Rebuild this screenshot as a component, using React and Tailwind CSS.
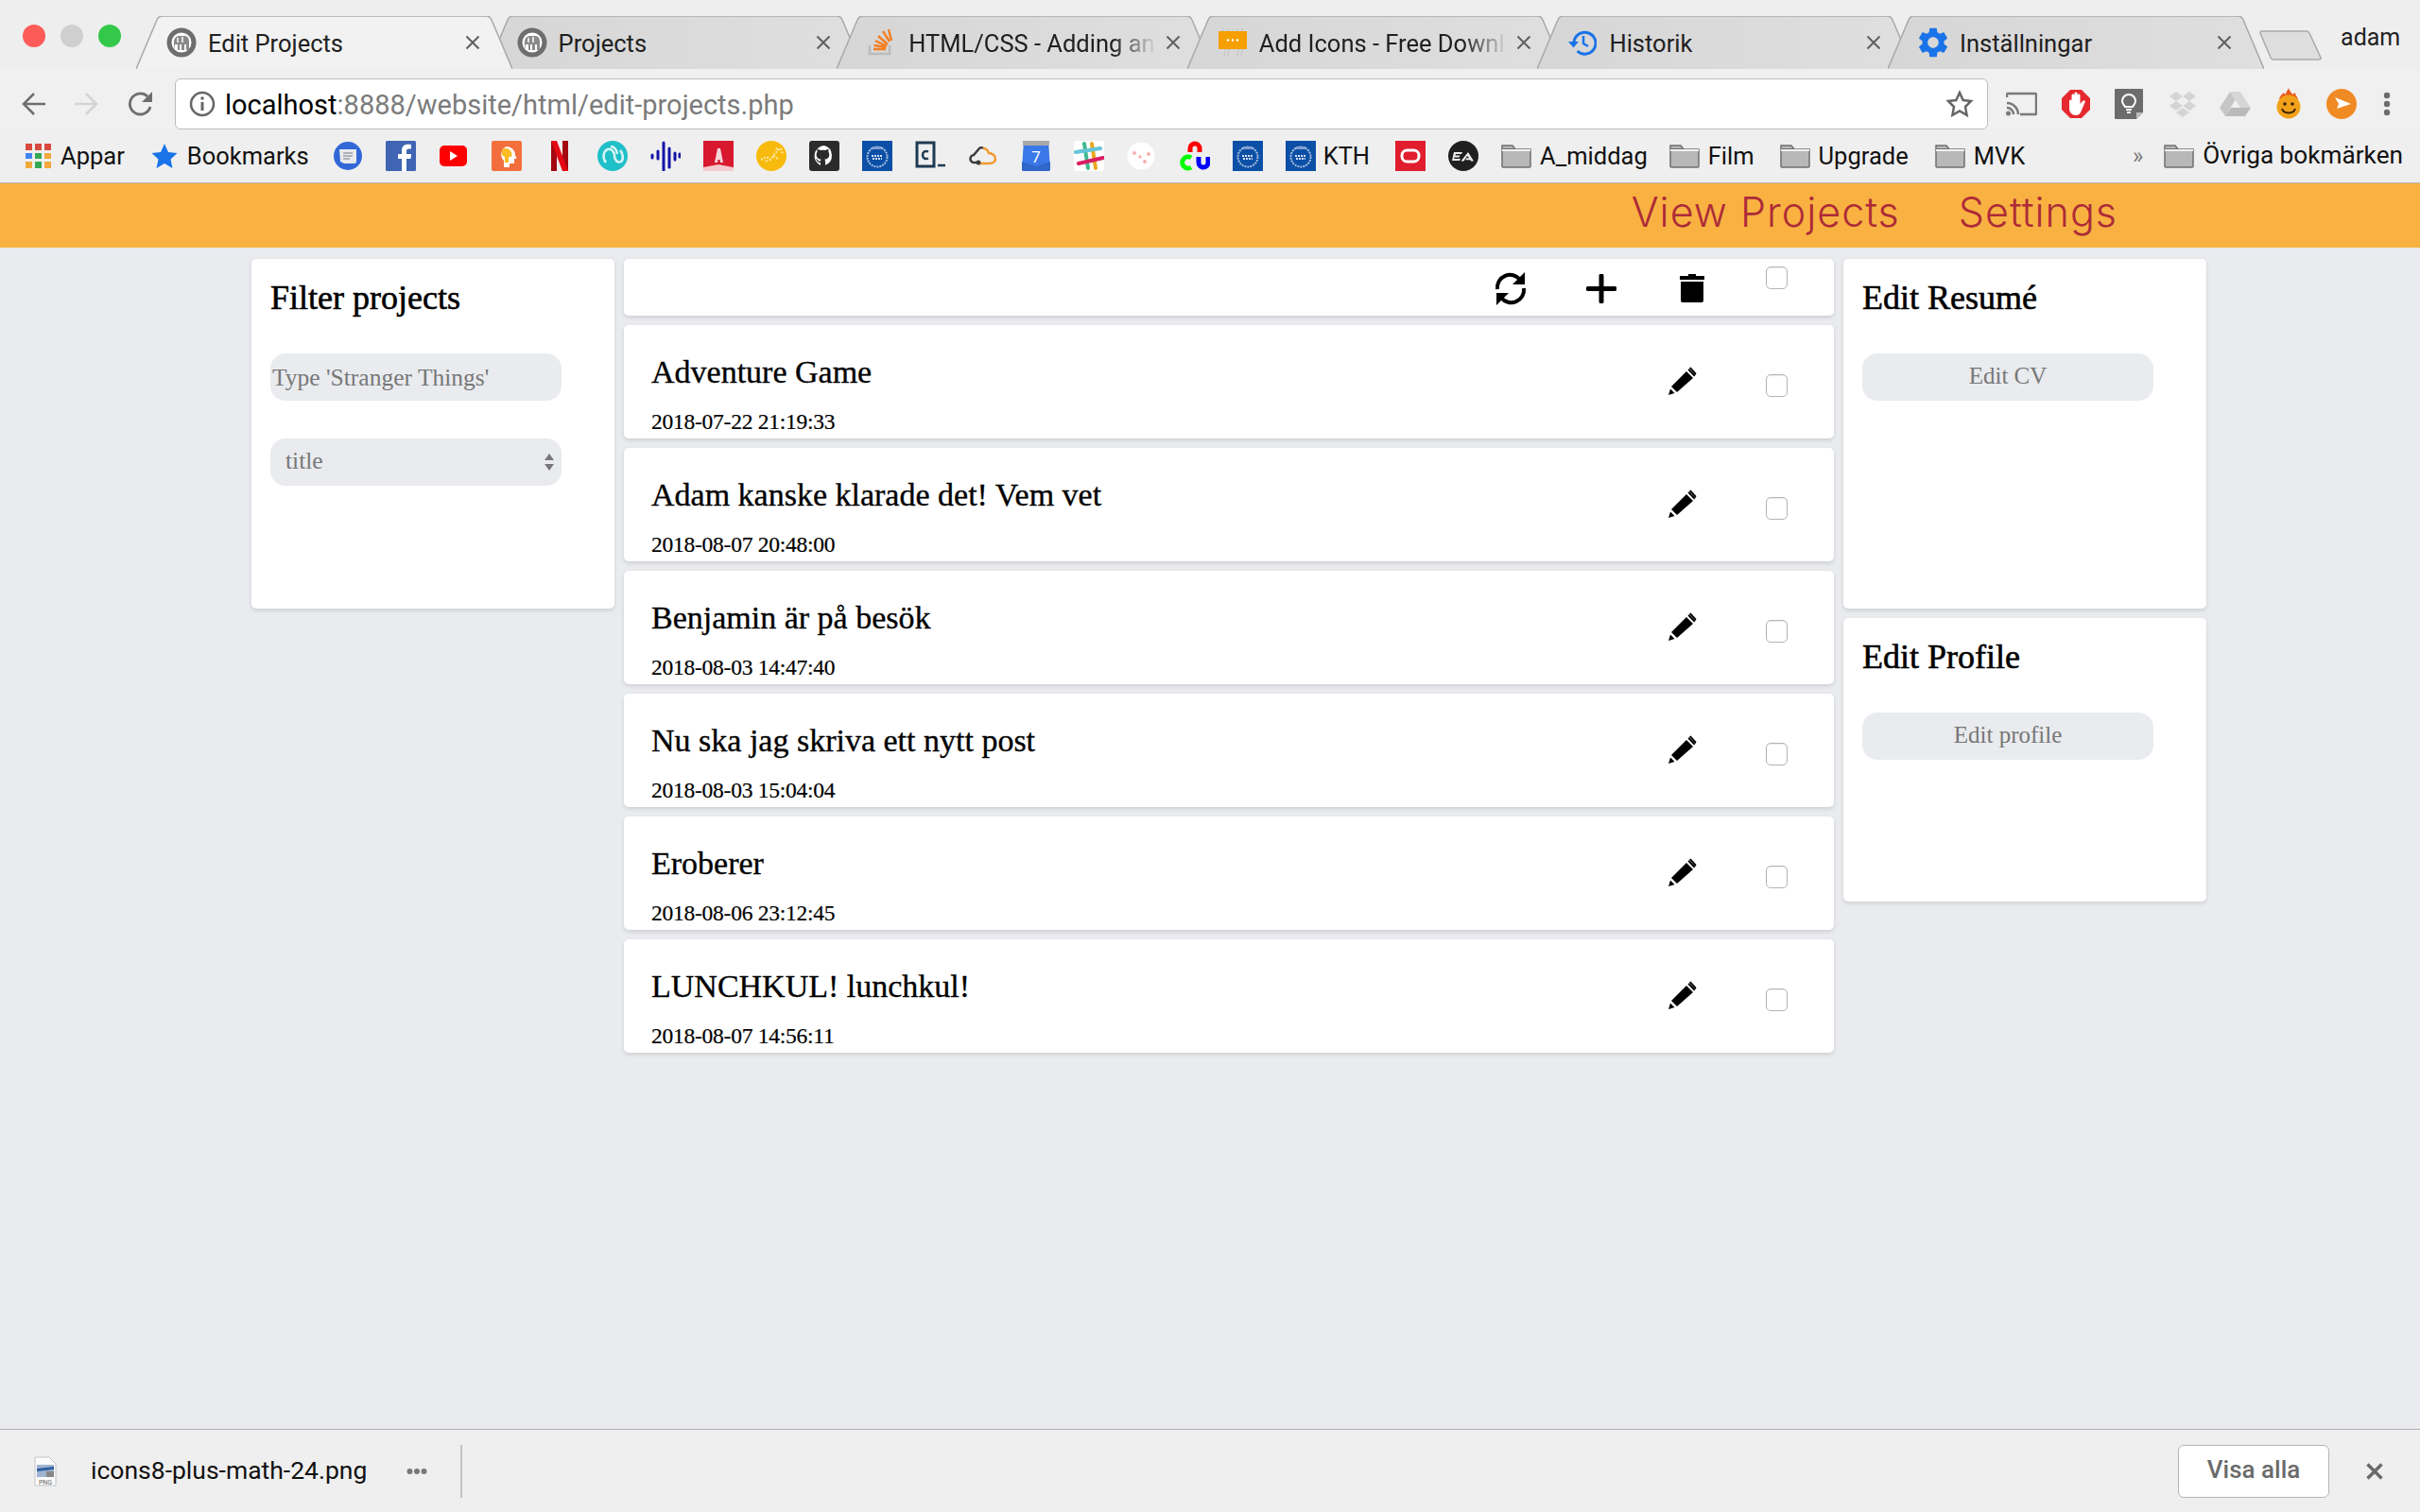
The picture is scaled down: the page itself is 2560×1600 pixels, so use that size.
const SANS = "font-['Roboto','Liberation_Sans',sans-serif]";
const SERIF = "font-['Liberation_Serif',serif]";

const projects = [
  { title: "Adventure Game", date: "2018-07-22 21:19:33" },
  { title: "Adam kanske klarade det! Vem vet", date: "2018-08-07 20:48:00" },
  { title: "Benjamin är på besök", date: "2018-08-03 14:47:40" },
  { title: "Nu ska jag skriva ett nytt post", date: "2018-08-03 15:04:04" },
  { title: "Eroberer", date: "2018-08-06 23:12:45" },
  { title: "LUNCHKUL! lunchkul!", date: "2018-08-07 14:56:11" },
];

const Ico = ({ w = 32, h = 32, className = "", children }) => (
  <svg width={w} height={h} viewBox={`0 0 ${w} ${h}`} className={`shrink-0 ${className}`} aria-hidden="true">
    {children}
  </svg>
);

const Elephant = () => (
  <Ico w={32} h={32}>
    <circle cx="16" cy="16" r="13" fill="#fff" stroke="#6e6e6e" strokeWidth="5" />
    <path d="M8 24v-9c0-4 3-6 6-6h5c3 0 5 2 5 6v9h-3v-6h-2v6h-3v-6h-2v6h-2v-6H9z" fill="#8a8a8a" />
    <path d="M12 11v5M17 10v6" stroke="#fff" strokeWidth="1.5" />
  </Ico>
);

const StackIcon = () => (
  <Ico w={32} h={32}>
    <path d="M3 19v9h21v-9" fill="none" stroke="#bcbbbb" strokeWidth="2.5" />
    <path d="M7 23h13M7.5 19l13 2M9 14l12 6M12 9l10 9M17 4l7 11M23 2l3 12" stroke="#f48024" strokeWidth="2.5" fill="none" />
  </Ico>
);

const AddIcon = () => (
  <Ico w={30} h={32}>
    <path d="M5 4V1M10 4V1M15 4V1M20 4V1M25 4V1M7 23l-1 8M11 23l-1 8M21 23l-1 8M25 23l-1 8" stroke="#c9c9c9" strokeWidth="1.5" />
    <rect y="4" width="30" height="19" fill="#f59f00" />
    <circle cx="10" cy="13.500" r="1.300" fill="#fff" />
    <circle cx="15" cy="13.500" r="1.300" fill="#fff" />
    <circle cx="20" cy="13.500" r="1.300" fill="#fff" />
  </Ico>
);

const HistoryIcon = () => (
  <Ico w={30} h={30}>
    <path d="M6 15A11.5 11.5 0 1 1 9.5 24" fill="none" stroke="#1a73e8" strokeWidth="3" />
    <path d="M0 14h11l-5.500 6.500z" fill="#1a73e8" />
    <path d="M16 8v8l5 3" fill="none" stroke="#1a73e8" strokeWidth="2.500" />
  </Ico>
);

const GearIcon = () => (
  <svg width="32" height="32" viewBox="2.500 2 19 20" className="shrink-0" aria-hidden="true">
    <path
      fill="#1a73e8"
      d="M19.14 12.94c.04-.3.06-.61.06-.94 0-.32-.02-.64-.07-.94l2.03-1.58c.18-.14.23-.41.12-.61l-1.92-3.32c-.12-.22-.37-.29-.59-.22l-2.39.96c-.5-.38-1.03-.7-1.62-.94l-.36-2.54c-.04-.24-.24-.41-.48-.41h-3.84c-.24 0-.43.17-.47.41l-.36 2.54c-.59.24-1.13.57-1.62.94l-2.39-.96c-.22-.08-.47 0-.59.22L2.74 8.87c-.12.21-.08.47.12.61l2.03 1.58c-.05.3-.09.63-.09.94s.02.64.07.94l-2.03 1.58c-.18.14-.23.41-.12.61l1.92 3.32c.12.22.37.29.59.22l2.39-.96c.5.38 1.03.7 1.62.94l.36 2.54c.05.24.24.41.48.41h3.84c.24 0 .44-.17.47-.41l.36-2.54c.59-.24 1.13-.56 1.62-.94l2.39.96c.22.08.47 0 .59-.22l1.92-3.32c.12-.22.07-.47-.12-.61l-2.01-1.58zM12 15.6c-1.98 0-3.6-1.62-3.6-3.6s1.62-3.6 3.6-3.6 3.6 1.62 3.6 3.6-1.62 3.6-3.6 3.6z"
    />
  </svg>
);

const tabs = [
  { title: "Edit Projects", icon: <Elephant />, active: true },
  { title: "Projects", icon: <Elephant /> },
  { title: "HTML/CSS - Adding an", icon: <StackIcon />, fade: true },
  { title: "Add Icons - Free Downl", icon: <AddIcon />, fade: true },
  { title: "Historik", icon: <HistoryIcon /> },
  { title: "Inställningar", icon: <GearIcon /> },
];

const Tab = ({ tab, index }) => (
  <div className={`relative flex h-[56px] w-[398px] items-center pl-[32px] pr-[33px] ${index ? "-ml-[27.4px]" : ""} ${tab.active ? "z-10" : ""}`}>
    <svg viewBox="0 0 398 56" className="absolute inset-0 h-full w-full" aria-hidden="true">
      <path
        d="M0 56 L22 4 Q23.500 0 28 0 H370 Q374.500 0 376 4 L398 56"
        fill={tab.active ? "#f2f2f2" : "url(#tabfill)"}
        stroke="#a9a9a9"
        strokeWidth="1.500"
      />
    </svg>
    <span className="relative flex w-[32px] justify-center">{tab.icon}</span>
    <span
      className={`relative ml-[12px] min-w-0 flex-1 whitespace-nowrap pt-[2px] text-[25.5px] text-[#202020] ${tab.fade ? "[mask-image:linear-gradient(to_right,black_82%,transparent)]" : ""}`}
    >
      {tab.title}
    </span>
    <svg width="18" height="18" viewBox="0 0 18 18" className="relative ml-[8px] shrink-0" aria-hidden="true">
      <path d="M2.500 2.500l13 13M15.500 2.500l-13 13" stroke="#5f5f5f" strokeWidth="2" />
    </svg>
  </div>
);

const Kth = () => (
  <Ico>
    <rect width="32" height="32" fill="#0b4fa6" />
    <circle cx="16" cy="17" r="10.500" fill="none" stroke="#a9c0e2" strokeWidth="2" strokeDasharray="2 1" />
    <path d="M10 16h12M11 19h10" stroke="#d6e1f2" strokeWidth="2" strokeDasharray="2 1" />
    <path d="M11 6h10v3H11z" fill="#7f9fd0" />
  </Ico>
);

const Folder = () => (
  <svg width="32" height="26" viewBox="0 0 32 26" className="shrink-0" aria-hidden="true">
    <path d="M1 24V2h11l3 4h16v18a1 1 0 0 1-1 1H2a1 1 0 0 1-1-1z" fill="#b8b8b8" stroke="#6f6f6f" strokeWidth="1.500" />
    <path d="M1 7h30" stroke="#f2f2f2" strokeWidth="2" />
    <path d="M1 5.500h14" stroke="#6f6f6f" strokeWidth="1" />
  </svg>
);

const Bookmark = ({ icon, label, className = "", labelClass = "text-[25.5px]" }) => (
  <div className={`flex shrink-0 items-center gap-[9px] ${className}`}>
    {icon}
    <span className={`whitespace-nowrap text-[#111] ${labelClass}`}>{label}</span>
  </div>
);

const bookmarkIcons = [
  <Ico key="msg">
    <circle cx="16" cy="16" r="15" fill="#3367d6" />
    <path d="M7 9h18v13a2 2 0 0 1-2 2H12l-4-2z" fill="#e8eaed" />
    <path d="M11 13h10M11 16h10M11 19h7" stroke="#9aa0a6" strokeWidth="1.500" />
  </Ico>,
  <Ico key="fb">
    <rect width="32" height="32" rx="1.500" fill="#3f65b3" />
    <path d="M22 32V19h4.500l.6-5H22v-3c0-1.500.5-2.500 2.500-2.500H27V4c-1-.1-2-.2-3.500-.2-3.500 0-6.500 2-6.500 6.500V14h-4v5h4v13z" fill="#fff" />
  </Ico>,
  <Ico key="yt">
    <rect x="1" y="5" width="29" height="22" rx="5" fill="#f00" />
    <path d="M12 11l8 5-8 5z" fill="#fff" />
  </Ico>,
  <Ico key="lh">
    <rect width="32" height="32" rx="2" fill="#f26f3d" />
    <path d="M16 6a9 9 0 0 1 9 9c0 1 1.500 3 1.500 4H24v5h-5v4h-6v-7a9 9 0 0 1 3-15z" fill="#fff" />
    <path d="M15 8a6.500 6.500 0 0 1 6 9h-3v6h-4v-6c-3-1-4-3-3-6s2-3 4-3z" fill="#fbbc24" />
  </Ico>,
  <Ico key="nf">
    <path d="M7 0h6v32H7zM19 0h6v32h-6z" fill="#a30810" />
    <path d="M7 0h6l12 32h-6z" fill="#e50914" />
  </Ico>,
  <Ico key="teal">
    <circle cx="16" cy="16" r="16" fill="#20c0c8" />
    <path d="M9 23c-4-5-3-12 2-14 4-1 7 3 7 7s3 8 7 6c3-2 2-9-1-12M14 6c3 0 7 3 7 8" fill="none" stroke="#d8f4f5" strokeWidth="2.500" />
  </Ico>,
  <Ico key="wave">
    <path d="M2 15v3M8 11v8M14 2v30M20 8v20M26 13v7M31 14v3" stroke="#1414a8" strokeWidth="3" strokeLinecap="round" />
  </Ico>,
  <Ico key="ang">
    <rect width="32" height="32" fill="#d8182f" />
    <path d="M12 23l3-15h3l3 15h-3l-.5-3h-2l-.5 3z" fill="#f6d7da" />
    <path d="M0 32v-4l16-3 16 3v4z" fill="#f4c9ce" />
  </Ico>,
  <Ico key="yel">
    <circle cx="16" cy="16" r="16" fill="#f8bb0d" />
    <path d="M5 20l6-3 4 3 5-7 5-5M10 22l3-2M21 8l3 2M18 16l5 3M26 8l2 6" stroke="#fde9a8" strokeWidth="2" strokeDasharray="2 1.500" fill="none" />
  </Ico>,
  <Ico key="gh">
    <rect width="32" height="32" rx="3" fill="#2b2b2b" />
    <path d="M16 5a11 11 0 0 0-4 21v-3c-3 .5-3.500-1.500-4-2.500l-1-1c1-.5 2 .5 2.500 1.500 1 1 2 .7 2.500.3.100-.6.300-1.100.6-1.500-3-.4-5-1.800-5-5 0-1.200.4-2.200 1-3-.1-.5-.4-1.500.1-3 0 0 1 0 3 1.300a10 10 0 0 1 5.500 0c2-1.300 3-1.300 3-1.300.5 1.500.2 2.500.1 3 .6.800 1 1.800 1 3 0 3.200-2 4.600-5 5 .4.400.7 1 .7 2v4A11 11 0 0 0 16 5z" fill="#fff" />
  </Ico>,
  <Kth key="kth1" />,
  <Ico key="c">
    <path d="M2 2h18v25H2z" fill="none" stroke="#1d3a52" strokeWidth="3" />
    <path d="M14 11.500c-3-1.500-6 0-6 3.500s3 5 6 3.500" fill="none" stroke="#1d3a52" strokeWidth="2.500" />
    <path d="M24 26h8" stroke="#1d3a52" strokeWidth="2.500" />
  </Ico>,
  <Ico key="cloud">
    <path d="M11 23H7a4 4 0 0 1-1-8l6-7c1-1 3-1 4 0" fill="none" stroke="#3d3d3d" strokeWidth="2.500" />
    <path d="M16 8c3 0 5 2 6 5 4 0 7 3 7 6s-3 5-6 5H11" fill="none" stroke="#f29a2e" strokeWidth="2.500" />
    <circle cx="11" cy="23" r="2.500" fill="#3d3d3d" />
  </Ico>,
  <Ico key="cal">
    <path d="M3 0h26l2 30a2 2 0 0 1-2 2H3a2 2 0 0 1-2-2z" fill="#3b78e7" />
    <path d="M2 0h28v5H2z" fill="#a9a9a9" />
    <path d="M1 22l15 5 15-5v8a2 2 0 0 1-2 2H3a2 2 0 0 1-2-2z" fill="#2f66c9" />
    <text x="16" y="23" textAnchor="middle" fontSize="17" fill="#fff" fontFamily="Roboto, sans-serif">7</text>
  </Ico>,
  <Ico key="slack">
    <rect width="32" height="32" rx="3" fill="#fff" />
    <path d="M11 3l4 26" stroke="#3eb890" strokeWidth="4" strokeLinecap="round" />
    <path d="M19 3l4 26" stroke="#e9a820" strokeWidth="4" strokeLinecap="round" />
    <path d="M2 12l26-4" stroke="#63c5d8" strokeWidth="4" strokeLinecap="round" />
    <path d="M5 24l26-6" stroke="#d81e63" strokeWidth="4" strokeLinecap="round" />
  </Ico>,
  <Ico key="face">
    <circle cx="15" cy="16" r="14.500" fill="#fff" />
    <circle cx="8" cy="13" r="2" fill="#f3b3ad" />
    <circle cx="23" cy="14" r="2" fill="#f3b3ad" />
    <circle cx="14" cy="17" r="1.700" fill="#f3b3ad" />
    <circle cx="19" cy="22" r="2" fill="#f3b3ad" />
  </Ico>,
  <Ico key="rgb">
    <path d="M11 12V8a5 5 0 0 1 10 0v4" fill="none" stroke="#f00" strokeWidth="5" />
    <path d="M12 18a6 6 0 1 0 0 10" fill="none" stroke="#0f0" strokeWidth="5" />
    <path d="M20 17v6a5 5 0 0 0 10 0v-6" fill="none" stroke="#00f" strokeWidth="5" />
  </Ico>,
  <Kth key="kth2" />,
  <Kth key="kth3" />,
];

const ActionIcons = () => (
  <div className="ml-[19px] flex items-center">
    <svg width="33" height="26" viewBox="0 0 33 26" aria-hidden="true">
      <path d="M1 6V3a1 1 0 0 1 1-1h29a1 1 0 0 1 1 1v20a1 1 0 0 1-1 1H15" fill="none" stroke="#7a7a7a" strokeWidth="2.500" />
      <path d="M1 12a12 12 0 0 1 12 12M1 17a7 7 0 0 1 7 7" fill="none" stroke="#7a7a7a" strokeWidth="2.500" />
      <circle cx="2.500" cy="23" r="2.500" fill="#7a7a7a" />
    </svg>
    <svg width="32" height="32" viewBox="0 0 32 32" className="ml-[25px]" aria-hidden="true">
      <path d="M10 1h12l9 9v12l-9 9H10l-9-9V10z" fill="#e5292f" />
      <path d="M9 21v-8c0-2 2.500-2 2.500 0V7c0-2 3-2 3 0V5c0-2 3-2 3 0v2c0-2 3-2 3 0v9l2.500-3c2-2 3.500 0 2.500 1.500L21 25c-1 2-3 3-5 3-4 0-7-3-7-7z" fill="#fff" />
    </svg>
    <svg width="32" height="32" viewBox="0 0 32 32" className="ml-[24px]" aria-hidden="true">
      <path d="M2 0h28a1 1 0 0 1 1 1v24l-7 7H2a1 1 0 0 1-1-1V1a1 1 0 0 1 1-1z" fill="#6c6c6c" />
      <path d="M31 25h-7v7z" fill="#bdbdbd" />
      <path d="M12 19c-1-2-3-3-3-6a7 7 0 0 1 14 0c0 3-2 4-3 6zM13 22h6M14 25h4" fill="none" stroke="#fff" strokeWidth="2" />
    </svg>
    <svg width="30" height="28" viewBox="0 0 30 28" className="ml-[26px]" aria-hidden="true">
      <path d="M8 1l7 5-7 5-7-5zM22 1l7 5-7 5-7-5zM8 11l7 5-7 5-7-5zM22 11l7 5-7 5-7-5zM15 18l7 5-7 5-7-5z" fill="#d4d4d4" />
    </svg>
    <svg width="33" height="28" viewBox="0 0 33 28" className="ml-[24px]" aria-hidden="true">
      <path d="M11 1h11l11 17H22z" fill="#d6d6d6" />
      <path d="M11 1l5.500 9L6 27 0 18z" fill="#c6c6c6" />
      <path d="M6 27h21l6-9H12z" fill="#bababa" />
    </svg>
    <svg width="26" height="33" viewBox="0 0 26 33" className="ml-[27px]" aria-hidden="true">
      <path d="M13 0c1 4 3 4 4 7 1-1 2-1 3-2 0 3 2 4 3 7l-20 0c1-4 3-5 5-7 1 1 1 2 2 2 0-3 2-4 3-7z" fill="#e85a1b" />
      <circle cx="13" cy="20" r="12.500" fill="#f1a21a" />
      <circle cx="9" cy="17" r="1.800" fill="#3a2200" />
      <circle cx="17" cy="17" r="1.800" fill="#3a2200" />
      <path d="M6 22c2 6 12 6 14 0" fill="none" stroke="#3a2200" strokeWidth="2" />
    </svg>
    <svg width="32" height="32" viewBox="0 0 32 32" className="ml-[27px]" aria-hidden="true">
      <circle cx="16" cy="16" r="16" fill="#f08a24" />
      <path d="M9 9l17 7-15 5 2-5z" fill="#fff" />
    </svg>
    <svg width="8" height="26" viewBox="0 0 8 26" className="ml-[28px]" aria-hidden="true">
      <circle cx="4" cy="4" r="3.200" fill="#6c6c6c" />
      <circle cx="4" cy="13" r="3.200" fill="#6c6c6c" />
      <circle cx="4" cy="22" r="3.200" fill="#6c6c6c" />
    </svg>
  </div>
);

const Checkbox = ({ className = "" }) => (
  <input type="checkbox" className={`h-[24px] w-[23px] shrink-0 appearance-none rounded-[5px] border border-[#b4b4b4] bg-white shadow-[inset_0_1px_1px_rgba(0,0,0,0.08)] ${className}`} />
);

const Pencil = () => (
  <svg width="32" height="31" viewBox="0 0 32 31" className="mt-[44px] shrink-0" aria-hidden="true">
    <path d="M20 5l7 7L10 27l-6-6z" fill="#000" />
    <path d="M23 1.500l1.500-1 6 6.500-1 2z" fill="#000" />
    <path d="M1 30l2-6.500 4.500 4.500z" fill="#000" />
    <path d="M21.500 3.500l1.500-1.500 6.500 7-1.500 1.500z" fill="#000" />
  </svg>
);

const ProjectRow = ({ project }) => (
  <article className="flex h-[120px] overflow-hidden rounded-[5px] bg-white shadow-[0_2px_4px_rgba(0,0,0,0.12)]">
    <div className="min-w-0 flex-1 pl-[29px] pt-[29px] text-black">
      <h3 className={`${SERIF} text-[34px] leading-[42px] [-webkit-text-stroke:0.35px_black]`}>{project.title}</h3>
      <p className={`${SERIF} mt-[16px] text-[23.5px] leading-[30px] tracking-[-0.25px] [-webkit-text-stroke:0.2px_black]`}>{project.date}</p>
    </div>
    <Pencil />
    <Checkbox className="ml-[72px] mr-[49px] mt-[52px]" />
  </article>
);

const SideCard = ({ title, height, children }) => (
  <section className={`rounded-[5px] bg-white px-[20px] pt-[20px] shadow-[0_2px_4px_rgba(0,0,0,0.12)] ${height}`}>
    <h2 className={`${SERIF} text-[36px] leading-[42px] text-black [-webkit-text-stroke:0.6px_black]`}>{title}</h2>
    {children}
  </section>
);

const GreyButton = ({ children }) => (
  <button className={`${SERIF} mt-[38px] block h-[50px] w-[308px] rounded-[16px] bg-[#e9ebee] pb-[3px] text-center text-[25px] text-[#777]`}>
    {children}
  </button>
);

export default function App() {
  return (
    <div className={`${SANS} flex h-screen flex-col overflow-hidden bg-[#e9ebee]`}>
      <svg width="0" height="0" className="absolute">
        <defs>
          <linearGradient id="tabfill" x1="0" y1="0" x2="1" y2="0">
            <stop offset="0" stopColor="#d6d6d6" />
            <stop offset="1" stopColor="#dfdfdf" />
          </linearGradient>
        </defs>
      </svg>

      {/* tab strip */}
      <div className="flex h-[73px] shrink-0 items-end bg-[#eeeeee] pl-[24px]">
        <div className="mb-[23px] flex gap-[16px]">
          <span className="h-[24px] w-[24px] rounded-full bg-[#fc5b57]" />
          <span className="h-[24px] w-[24px] rounded-full bg-[#cfcfcf]" />
          <span className="h-[24px] w-[24px] rounded-full bg-[#34c84a]" />
        </div>
        <div className="ml-[16px] flex">
          {tabs.map((tab, index) => (
            <Tab key={tab.title} tab={tab} index={index} />
          ))}
        </div>
        <svg width="66" height="32" viewBox="0 0 66 32" className="-ml-[5px] mb-[9px] shrink-0" aria-hidden="true">
          <path d="M1 3q-.500-2 2-2h47q2 0 3 2l12 26q.500 2-2 2H15q-2 0-3-2z" fill="#dedede" stroke="#a9a9a9" strokeWidth="1.500" />
        </svg>
        <span className="mb-[19px] ml-[20px] text-[25px] leading-[28px] text-[#222]">adam</span>
      </div>

      {/* address bar */}
      <div className="flex h-[64px] shrink-0 items-start bg-[#f0f0f0] pt-[10px]">
        <div className="flex h-[54px] w-[185px] shrink-0 items-center pl-[23px]">
          <svg width="26" height="26" viewBox="0 0 26 26" aria-hidden="true">
            <path d="M25 13H2M13 2L2 13l11 11" fill="none" stroke="#6e6e6e" strokeWidth="2.500" />
          </svg>
          <svg width="26" height="26" viewBox="0 0 26 26" className="ml-[29px]" aria-hidden="true">
            <path d="M1 13h23M13 2l11 11-11 11" fill="none" stroke="#d4d4d4" strokeWidth="2.500" />
          </svg>
          <svg width="28" height="28" viewBox="0 0 28 28" className="ml-[31px]" aria-hidden="true">
            <path d="M24 17a11 11 0 1 1-3-11" fill="none" stroke="#6e6e6e" strokeWidth="2.800" />
            <path d="M26 1v11H15z" fill="#6e6e6e" />
          </svg>
        </div>
        <div className="flex h-[54px] w-[1918px] shrink-0 items-center rounded-[6px] border border-[#bdbdbd] bg-white pl-[14px] pr-[14px]">
          <svg width="28" height="28" viewBox="0 0 28 28" className="shrink-0" aria-hidden="true">
            <circle cx="14" cy="14" r="12" fill="none" stroke="#666" strokeWidth="2.500" />
            <path d="M14 12v9" stroke="#666" strokeWidth="3" />
            <circle cx="14" cy="8" r="1.800" fill="#666" />
          </svg>
          <span className="ml-[10px] flex-1 pt-[3px] text-[29px] text-[#7b7b7b]">
            <span className="text-black">localhost</span>:8888/website/html/edit-projects.php
          </span>
          <svg width="30" height="30" viewBox="0 0 30 30" className="shrink-0" aria-hidden="true">
            <path d="M15 3l3.700 8 8.300 1-6 6 1.600 8.800L15 22.500l-7.600 4.300L9 18l-6-6 8.300-1z" fill="none" stroke="#666" strokeWidth="2.500" />
          </svg>
        </div>
        <div className="mt-[10px]">
          <ActionIcons />
        </div>
      </div>

      {/* bookmarks */}
      <div className="flex h-[56px] shrink-0 items-center bg-[#efefef] pl-[27px]">
        <Bookmark
          label="Appar"
          className="gap-[10px]"
          icon={
            <span className="grid h-[26px] w-[27px] grid-cols-3 gap-[3px]">
              {["#d84a3e", "#d84a3e", "#d84a3e", "#4285f4", "#34a853", "#f2a93b", "#f2a93b", "#34a853", "#f2a93b"].map((color, i) => (
                <span key={i} style={{ backgroundColor: color }} />
              ))}
            </span>
          }
        />
        <Bookmark
          label="Bookmarks"
          className="ml-[28px] gap-[10px]"
          icon={
            <svg width="28" height="28" viewBox="0 0 28 28" aria-hidden="true">
              <path d="M14 1l4 9 9.500 1-7 6.500 2 9.500L14 22l-8.500 5 2-9.500-7-6.500L10 10z" fill="#1a73e8" />
            </svg>
          }
        />
        <div className="ml-[25px] flex items-center gap-[24px]">
          {bookmarkIcons}
        </div>
        <span className="ml-[8px] text-[25.5px] text-[#111]">KTH</span>
        <Ico className="ml-[27px]">
          <rect width="32" height="32" fill="#e01e2e" />
          <rect x="7" y="10" width="18" height="12" rx="5.500" fill="none" stroke="#fff" strokeWidth="3" />
        </Ico>
        <Ico className="ml-[24px]">
          <circle cx="16" cy="16" r="16" fill="#202020" />
          <path d="M6 12h9l-1 2H8l-.5 1.500h5l-1 2h-5l-.5 1.500h7l-1 2H4zM21 12l6 9.500h-3l-.6-1.200h-5l1-2h3L20 16l-3.500 5.500h-3z" fill="#eee" />
        </Ico>
        <Bookmark label="A_middag" icon={<Folder />} className="ml-[24px] gap-[8px]" />
        <Bookmark label="Film" icon={<Folder />} className="ml-[23px] gap-[9px]" />
        <Bookmark label="Upgrade" icon={<Folder />} className="ml-[27px] gap-[8px]" />
        <Bookmark label="MVK" icon={<Folder />} className="ml-[28px] gap-[8px]" />
        <span className="ml-auto text-[24px] text-[#777]">»</span>
        <Bookmark
          label="Övriga bokmärken"
          labelClass="text-[26.2px]"
          icon={<Folder />}
          className="ml-[22px] mr-[18px] gap-[9px]"
        />
      </div>

      {/* site nav */}
      <nav className="flex h-[69px] shrink-0 items-center justify-end gap-[62px] border-t border-[#b5b5b5] bg-[#f9b242] pb-[8px] pr-[320px] font-['Inter',sans-serif] text-[43px] font-light tracking-[1px] text-[#ad2b38]">
        <a>View Projects</a>
        <a>Settings</a>
      </nav>

      <main className="flex min-h-0 flex-1 items-start gap-[10px] pl-[266px] pt-[12px]">
        <SideCard title="Filter projects" height="h-[370px] w-[384px]">
          <input
            placeholder="Type 'Stranger Things'"
            className={`${SERIF} mt-[38px] block h-[50px] w-[308px] rounded-[16px] bg-[#e9ebee] pl-[2px] pt-[2px] text-[25.5px] outline-none placeholder:text-[#777]`}
          />
          <div className="relative mt-[40px] w-[308px]">
            <select className={`${SERIF} block h-[50px] w-full appearance-none rounded-[16px] bg-[#e9ebee] pb-[1px] pl-[16px] text-[25.5px] text-[#777]`}>
              <option>title</option>
            </select>
            <svg width="10" height="20" viewBox="0 0 10 20" className="absolute right-[8px] top-[15px]" aria-hidden="true">
              <path d="M5 1l5 7H0zM5 19l5-7H0z" fill="#777" />
            </svg>
          </div>
        </SideCard>

        <div className="flex w-[1280px] shrink-0 flex-col gap-[10px]">
          <div className="flex h-[60px] justify-end rounded-[5px] bg-white shadow-[0_2px_4px_rgba(0,0,0,0.12)]">
            <svg width="36" height="37" viewBox="0 0 36 37" className="mt-[13px] shrink-0" aria-hidden="true">
              <path d="M28 9A13.500 13.500 0 0 0 4 19" fill="none" stroke="#000" strokeWidth="4" />
              <path d="M33 1v13H20z" fill="#000" />
              <path d="M32 18A13.500 13.500 0 0 1 8 28" fill="none" stroke="#000" strokeWidth="4" />
              <path d="M3 36V23h13z" fill="#000" />
            </svg>
            <svg width="32" height="31" viewBox="0 0 32 31" className="ml-[62px] mt-[16px] shrink-0" aria-hidden="true">
              <path d="M2 15.500h28M16 2v27" stroke="#000" strokeWidth="5" strokeLinecap="round" />
            </svg>
            <svg width="26" height="30" viewBox="0 0 26 30" className="ml-[67px] mt-[16px] shrink-0" aria-hidden="true">
              <path d="M9 0h8v2h9v4H0V2h9z" fill="#000" />
              <path d="M1 8h24v20a2 2 0 0 1-2 2H3a2 2 0 0 1-2-2z" fill="#000" />
            </svg>
            <Checkbox className="ml-[65px] mr-[49px] mt-[8px]" />
          </div>
          {projects.map((project) => (
            <ProjectRow key={project.title} project={project} />
          ))}
        </div>

        <div className="flex w-[384px] shrink-0 flex-col gap-[10px]">
          <SideCard title="Edit Resumé" height="h-[370px]">
            <GreyButton>Edit CV</GreyButton>
          </SideCard>
          <SideCard title="Edit Profile" height="h-[300px]">
            <GreyButton>Edit profile</GreyButton>
          </SideCard>
        </div>
      </main>

      {/* downloads shelf */}
      <footer className="flex h-[88px] shrink-0 items-center border-t border-[#b0b0b0] bg-[#efefef] pl-[36px]">
        <svg width="24" height="32" viewBox="0 0 24 32" className="shrink-0" aria-hidden="true">
          <path d="M1 1h15l7 7v23H1z" fill="#fbfbfb" stroke="#c4c4c4" />
          <path d="M3 9h18v13H3z" fill="#9fb4cf" />
          <path d="M3 13l18-2v3L3 16z" fill="#2f5fa0" />
          <path d="M13 16h8v6h-8z" fill="#888" />
          <text x="12" y="29.500" textAnchor="middle" fontSize="7" fill="#666" fontFamily="Roboto, sans-serif">PNG</text>
        </svg>
        <span className="ml-[36px] whitespace-nowrap pb-[2px] text-[26.5px] text-[#111]">icons8-plus-math-24.png</span>
        <svg width="22" height="8" viewBox="0 0 22 8" className="ml-[42px] shrink-0" aria-hidden="true">
          <circle cx="3.500" cy="4" r="3" fill="#777" />
          <circle cx="11" cy="4" r="3" fill="#777" />
          <circle cx="18.500" cy="4" r="3" fill="#777" />
        </svg>
        <span className="ml-[35px] h-[56px] w-[2px] bg-[#c4c4c4]" />
        <button className="ml-auto h-[56px] w-[160px] rounded-[6px] border border-[#b5b5b5] bg-white pb-[2px] text-[26px] font-medium text-[#6b6b6b]">
          Visa alla
        </button>
        <svg width="18" height="18" viewBox="0 0 18 18" className="ml-[39px] mr-[39px] shrink-0" aria-hidden="true">
          <path d="M1.500 1.500l15 15M16.500 1.500l-15 15" stroke="#6b6b6b" strokeWidth="3.500" />
        </svg>
      </footer>
    </div>
  );
}
